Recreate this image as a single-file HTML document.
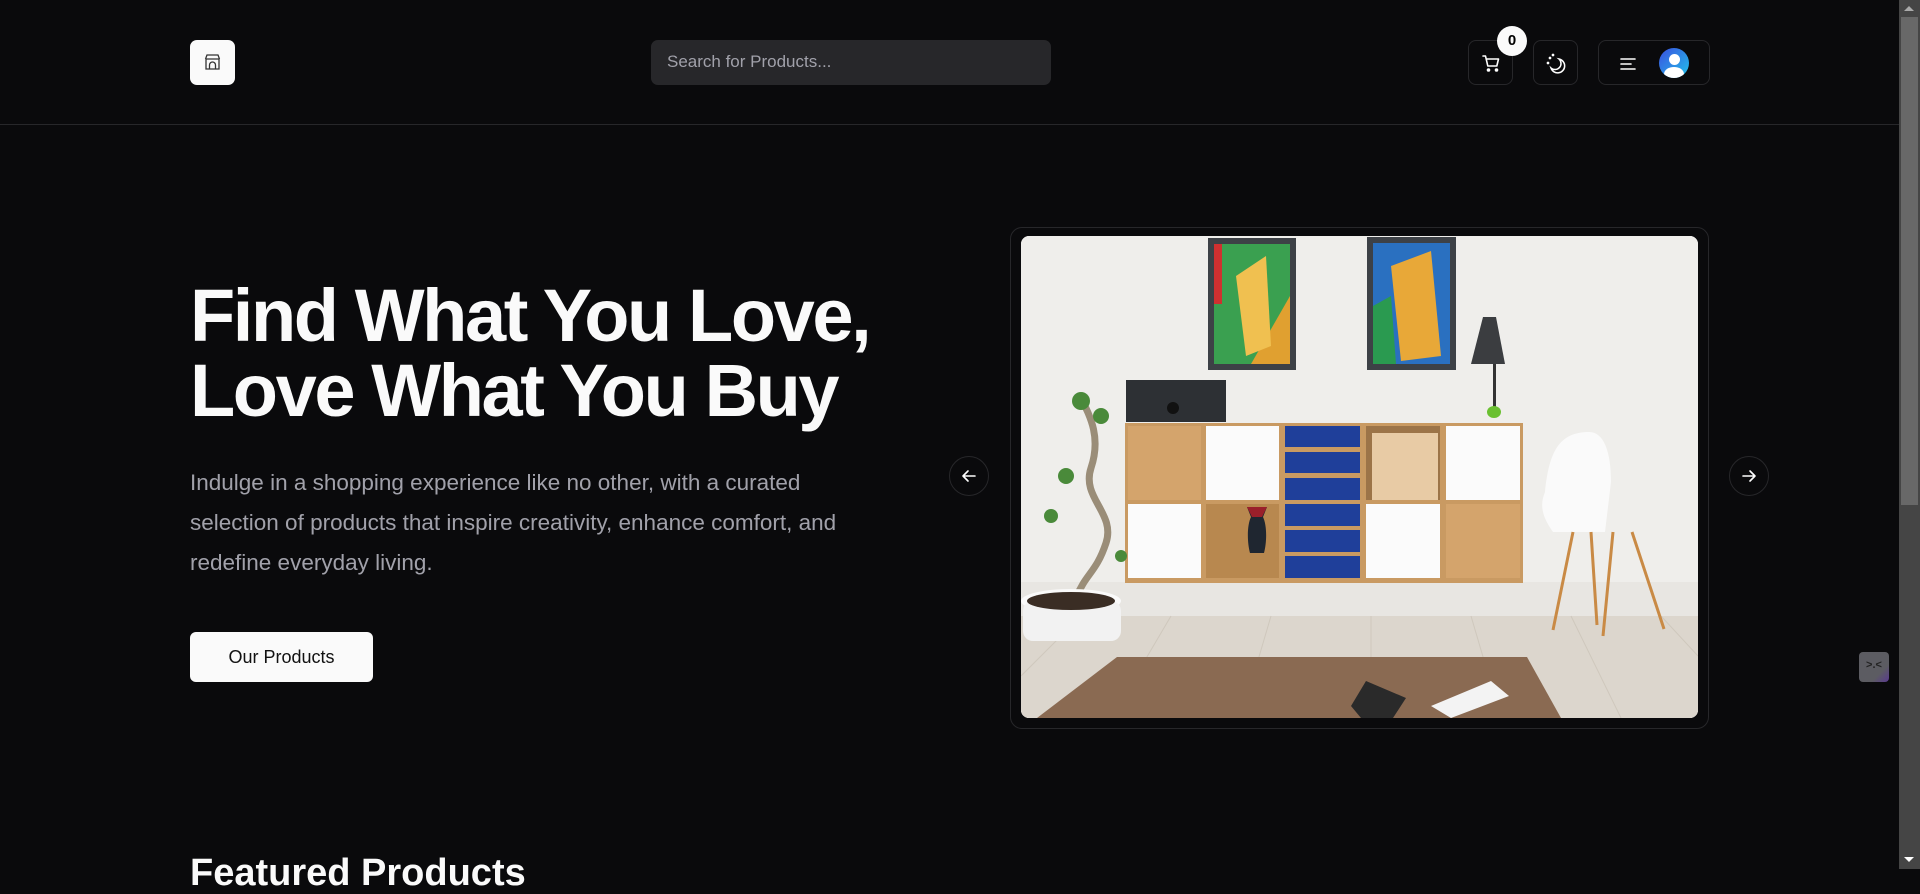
<!DOCTYPE html>
<html><head><meta charset="utf-8"><style>
*{margin:0;padding:0;box-sizing:border-box}
html,body{width:1920px;height:869px;overflow:hidden;background:#0a0a0c;font-family:"Liberation Sans",sans-serif;color:#fafafa}
.abs{position:absolute}
.hdr{left:0;top:0;width:1899px;height:125px;border-bottom:1px solid #27272a}
.ibox{border:1px solid #27272a;border-radius:8px;background:#0a0a0c}
</style></head><body>
<div class="abs hdr"></div>
<div class="abs" style="left:190px;top:40px;width:45px;height:45px;background:#fafafa;border-radius:7px">
<svg width="45" height="45" viewBox="0 0 45 45" fill="none" stroke="#333" stroke-width="1.3"><path d="M16 19h13v10H16z M15.5 19l1.5-4h11l1.5 4 M19.5 29v-4a3 3 0 0 1 6 0v4"/></svg></div>
<div class="abs" style="left:651px;top:40px;width:400px;height:45px;background:#27272a;border-radius:7px"></div>
<div class="abs" style="left:667px;top:52px;font-size:17px;color:#a1a1aa">Search for Products...</div>
<div class="abs ibox" style="left:1468px;top:40px;width:45px;height:45px">
<svg width="45" height="45" viewBox="0 0 45 45" fill="none" stroke="#fff" stroke-width="1.6" stroke-linecap="round" stroke-linejoin="round"><path d="M14 15h2.5l2.3 10h9l1.7-7H17.3"/><circle cx="19.5" cy="29" r="1" fill="#fff"/><circle cx="27.5" cy="29" r="1" fill="#fff"/></svg></div>
<div class="abs" style="left:1497px;top:26px;width:30px;height:30px;border-radius:50%;background:#fafafa;color:#000;font-weight:bold;font-size:15px;text-align:center;line-height:30px">0</div>
<div class="abs ibox" style="left:1533px;top:40px;width:45px;height:45px">
<svg width="45" height="45" viewBox="0 0 45 45" fill="none" stroke="#fff" stroke-width="1.5" stroke-linecap="round"><path d="M25 18a7 7 0 1 1-8 9a6 6 0 0 0 8-9z"/><circle cx="16" cy="17" r=".6" fill="#fff"/><circle cx="19" cy="14" r=".6" fill="#fff"/><circle cx="14" cy="22" r=".6" fill="#fff"/></svg></div>
<div class="abs ibox" style="left:1598px;top:40px;width:112px;height:45px">
<svg width="112" height="45" viewBox="0 0 112 45" stroke="#fff" stroke-width="1.6" stroke-linecap="round"><path d="M22 18h14M22 23h10M22 28h14"/></svg></div>
<div class="abs" style="left:1659px;top:48px;width:30px;height:30px;border-radius:50%;background:linear-gradient(135deg,#3a4fe0,#22c3ea);overflow:hidden">
<div class="abs" style="left:10px;top:6px;width:11px;height:11px;border-radius:50%;background:#fff"></div>
<div class="abs" style="left:5px;top:19px;width:20px;height:14px;border-radius:50% 50% 0 0;background:#fff"></div></div>

<div class="abs" style="left:190px;top:278px;font-size:74px;line-height:75px;font-weight:bold;letter-spacing:-2.4px;white-space:nowrap">Find What You Love,<br>Love What You Buy</div>
<div class="abs" style="left:190px;top:463px;font-size:22.5px;line-height:40px;color:#a1a1aa;white-space:nowrap">Indulge in a shopping experience like no other, with a curated<br>selection of products that inspire creativity, enhance comfort, and<br>redefine everyday living.</div>
<div class="abs" style="left:190px;top:632px;width:183px;height:50px;background:#fafafa;border-radius:6px;color:#111;font-size:18px;text-align:center;line-height:50px">Our Products</div>

<div class="abs" style="left:1010px;top:227px;width:699px;height:502px;border:1px solid #27272a;border-radius:12px"></div>
<div class="abs" style="left:1021px;top:236px;width:677px;height:482px;border-radius:8px;overflow:hidden;background:#efeeec">
<svg width="677" height="482" viewBox="0 0 677 482">
<rect width="677" height="482" fill="#efeeeb"/>
<rect y="346" width="677" height="36" fill="#e8e6e2"/>
<rect y="380" width="677" height="102" fill="#dcd6cd"/>
<g stroke="#cfc8bd" stroke-width="1"><path d="M60 380L0 440M150 380L90 482M250 380L220 482M350 380L350 482M450 380L480 482M550 380L600 482M640 380L677 420"/></g>
<polygon points="96,421 506,421 540,482 16,482" fill="#8a6a52"/>
<polygon points="330,470 345,445 385,462 372,482 340,482" fill="#2a2a2a"/>
<polygon points="410,470 470,445 488,460 430,482" fill="#f3f3f3"/>
<rect x="187" y="2" width="88" height="132" fill="#3d4146"/><rect x="193" y="8" width="76" height="120" fill="#e0a030"/>
<polygon points="193,8 269,8 269,60 230,128 193,128" fill="#3aa050"/><polygon points="215,40 245,20 250,110 225,120" fill="#f0c050"/><rect x="193" y="8" width="8" height="60" fill="#d03030"/>
<rect x="346" y="1" width="89" height="133" fill="#3d4146"/><rect x="352" y="7" width="77" height="121" fill="#2a70c0"/>
<polygon points="370,30 410,15 420,120 380,125" fill="#e8a838"/><polygon points="352,70 370,60 375,128 352,128" fill="#2a9a50"/>
<polygon points="462,81 475,81 484,128 450,128" fill="#3b3d40"/><rect x="472" y="128" width="3" height="47" fill="#333"/>
<ellipse cx="473" cy="176" rx="7" ry="6" fill="#6ac030"/>
<rect x="105" y="144" width="100" height="42" fill="#2d3034"/><circle cx="152" cy="172" r="6" fill="#111"/>
<rect x="104" y="187" width="398" height="160" fill="#c99a62"/>
<rect x="107" y="190" width="73" height="74" fill="#d4a46c"/>
<rect x="185" y="190" width="73" height="74" fill="#fbfbfb"/>
<rect x="107" y="268" width="73" height="74" fill="#fbfbfb"/>
<rect x="185" y="268" width="73" height="74" fill="#b8884f"/>
<path d="M226 271h20l-4 10c4 8 4 25 1 36h-14c-3-11-3-28 1-36z" fill="#1f2630"/><path d="M226 271h20l-5 10h-10z" fill="#9a1f2a"/>
<g fill="#1f3f9a"><rect x="264" y="190" width="75" height="21"/><rect x="264" y="216" width="75" height="21"/><rect x="264" y="242" width="75" height="22"/><rect x="264" y="268" width="75" height="22"/><rect x="264" y="294" width="75" height="22"/><rect x="264" y="320" width="75" height="22"/></g>
<rect x="345" y="190" width="74" height="74" fill="#9c7448"/><rect x="351" y="197" width="66" height="67" fill="#e8cba5"/>
<rect x="425" y="190" width="74" height="74" fill="#fbfbfb"/>
<rect x="345" y="268" width="74" height="74" fill="#fbfbfb"/>
<rect x="425" y="268" width="74" height="74" fill="#d4a46c"/>
<path d="M568 196c15 0 22 20 22 50l-6 50h-52c-10-14-14-26-8-40c4-40 14-60 44-60z" fill="#fafafa"/>
<path d="M552 296l-20 98M570 296l6 93M592 296l-10 104M611 296l32 97" stroke="#c98a45" stroke-width="3"/>
<path d="M60 162c10 20 20 40 10 70c-10 30 25 45 15 75c-10 30-20 30-30 55" stroke="#9a8d78" stroke-width="7" fill="none"/>
<g fill="#4a8a3a"><circle cx="60" cy="165" r="9"/><circle cx="80" cy="180" r="8"/><circle cx="45" cy="240" r="8"/><circle cx="30" cy="280" r="7"/><circle cx="100" cy="320" r="6"/></g>
<ellipse cx="50" cy="365" rx="50" ry="12" fill="#fafafa"/><rect x="2" y="365" width="98" height="40" rx="10" fill="#f2f2f2"/><ellipse cx="50" cy="365" rx="44" ry="9" fill="#3a2d24"/>
</svg></div>
<div class="abs" style="left:949px;top:456px;width:40px;height:40px;border-radius:50%;border:1px solid #27272a">
<svg width="38" height="38" viewBox="0 0 38 38" fill="none" stroke="#fff" stroke-width="1.6" stroke-linecap="round" stroke-linejoin="round"><path d="M25 19H13M18 14l-5 5 5 5"/></svg></div>
<div class="abs" style="left:1729px;top:456px;width:40px;height:40px;border-radius:50%;border:1px solid #27272a">
<svg width="38" height="38" viewBox="0 0 38 38" fill="none" stroke="#fff" stroke-width="1.6" stroke-linecap="round" stroke-linejoin="round"><path d="M13 19h12M20 14l5 5-5 5"/></svg></div>

<div class="abs" style="left:1859px;top:652px;width:30px;height:30px;border-radius:4px;background:linear-gradient(135deg,#5c5c62 70%,#5a3a90);color:#222;font-size:11px;font-weight:bold;text-align:center;line-height:26px">&gt;.&lt;</div>
<div class="abs" style="left:190px;top:853px;font-size:38px;line-height:40px;font-weight:bold;color:#fafafa">Featured Products</div>

<div class="abs" style="left:1899px;top:0;width:21px;height:869px;background:#454545"></div>
<div class="abs" style="left:1901px;top:17px;width:17px;height:488px;background:#686868"></div>
<div class="abs" style="left:1904px;top:857px;width:0;height:0;border-left:5px solid transparent;border-right:5px solid transparent;border-top:5px solid #fff"></div>
<div class="abs" style="left:1904px;top:6px;width:0;height:0;border-left:5px solid transparent;border-right:5px solid transparent;border-bottom:5px solid #aaa"></div>
</body></html>
